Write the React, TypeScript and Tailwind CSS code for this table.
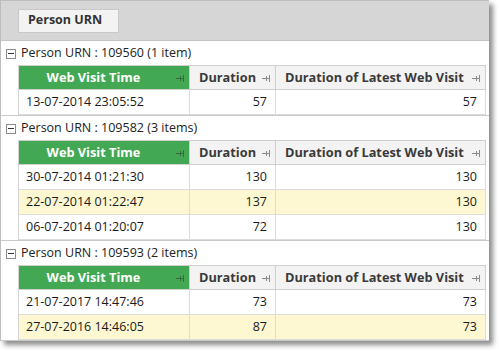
import React from "react";

type Row = { time: string; duration: number; latest: number };
type Group = { urn: string; rows: Row[] };

const groups: Group[] = [
    { urn: "109560", rows: [{ time: "13-07-2014 23:05:52", duration: 57, latest: 57 }] },
    {
        urn: "109582",
        rows: [
            { time: "30-07-2014 01:21:30", duration: 130, latest: 130 },
            { time: "22-07-2014 01:22:47", duration: 137, latest: 130 },
            { time: "06-07-2014 01:20:07", duration: 72, latest: 130 },
        ],
    },
    {
        urn: "109593",
        rows: [
            { time: "21-07-2017 14:47:46", duration: 73, latest: 73 },
            { time: "27-07-2016 14:46:05", duration: 87, latest: 73 },
        ],
    },
];

function Pin({ light }: { light?: boolean }) {
    return (
        <svg width="9" height="8" viewBox="0 0 9 8" className="shrink-0">
            <g stroke={light ? "#3a6b40" : "#8a8a8a"} strokeWidth="1" fill="none">
                <line x1="0" y1="4.5" x2="8" y2="4.5" />
                <line x1="4.5" y1="2" x2="4.5" y2="7" />
                <line x1="7.5" y1="1" x2="7.5" y2="8" />
            </g>
        </svg>
    );
}

function GroupBlock({ group }: { group: Group }) {
    const n = group.rows.length;
    return (
        <div className="border-b border-[#c9c9c9]">
            <div className="flex items-center h-[24px] pl-[5px] pt-[1px]">
                <div className="w-[10px] h-[10px] border border-[#8c8c8c] bg-white flex items-center justify-center">
                    <div className="w-[6px] h-[1px] bg-[#333]" />
                </div>
                <span className="ml-[5px] text-[#222]">
                    Person URN : {group.urn} ({n} {n === 1 ? "item" : "items"})
                </span>
            </div>
            <div className="ml-[17px] mr-[3px] border-l border-[#d4d4d4]">
                <div className="flex h-[25px] border-y border-[#cfcfcf] text-[12.75px]">
                    <div className="w-[171px] bg-[#43a853] text-white font-bold flex items-center pr-[4px] border-r border-[#cfcfcf]">
                        <span className="flex-1 text-center pr-[8px]">Web Visit Time</span>
                        <Pin light />
                    </div>
                    <div className="w-[86px] bg-[#f3f3f3] text-[#3a3a3a] font-bold flex items-center pl-[9px] pr-[4px] border-r border-[#cfcfcf]">
                        <span className="flex-1">Duration</span>
                        <Pin />
                    </div>
                    <div className="flex-1 bg-[#f3f3f3] text-[#3a3a3a] font-bold flex items-center pl-[9px] pr-[4px] border-r border-[#cfcfcf]">
                        <span className="flex-1">Duration of Latest Web Visit</span>
                        <Pin />
                    </div>
                </div>
                {group.rows.map((r, i) => (
                    <div
                        key={i}
                        className={
                            "flex h-[25px] border-b border-[#dcdcdc] text-[#1a1a1a] " +
                            (i % 2 === 1 ? "bg-[#fdf8d2]" : "bg-white")
                        }
                    >
                        <div className="w-[171px] flex items-center pl-[7px] border-r border-[#dcdcdc]">{r.time}</div>
                        <div className="w-[86px] flex items-center justify-end pr-[8px] border-r border-[#dcdcdc]">{r.duration}</div>
                        <div className="flex-1 flex items-center justify-end pr-[8px] border-r border-[#dcdcdc]">{r.latest}</div>
                    </div>
                ))}
            </div>
        </div>
    );
}

export default function App() {
    return (
        <div
            className="bg-white w-[499px] h-[351px] overflow-hidden"
            style={{ fontFamily: '"Open Sans", "Noto Sans", sans-serif' }}
        >
            <div className="w-[489px] h-[341px] border-l border-t border-[#bdbdbd] bg-white shadow-[4px_4px_5px_rgba(0,0,0,0.45)] overflow-hidden text-[12.5px]">
                <div className="h-[40px] bg-[#d6d6d6] border-b border-[#c4c4c4] flex items-center pl-[17px]">
                    <div className="w-[101px] h-[24px] bg-[#f3f3f3] border border-[#c9c9c9] flex items-center pl-[9px] font-bold text-[#333]">
                        Person URN
                    </div>
                </div>
                <div>
                    {groups.map((g) => (
                        <GroupBlock key={g.urn} group={g} />
                    ))}
                </div>
            </div>
        </div>
    );
}
